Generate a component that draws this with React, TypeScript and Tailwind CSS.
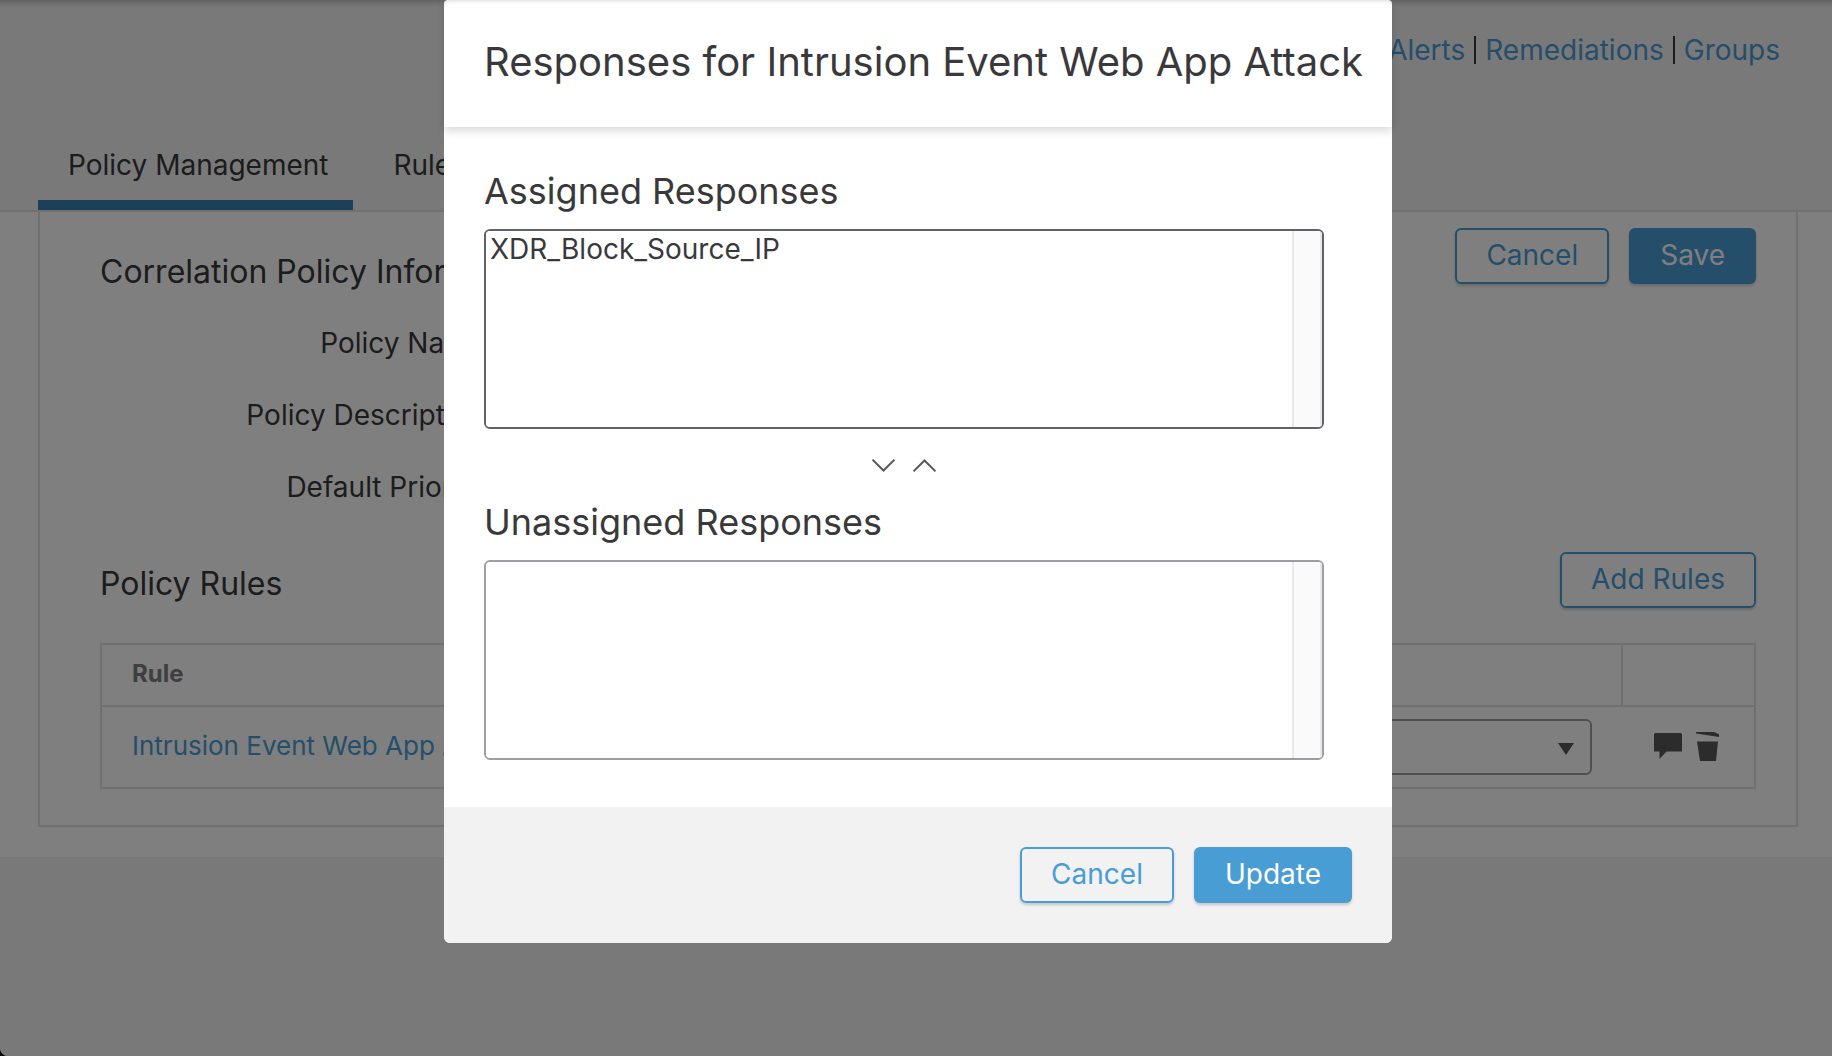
import React from "react";

const outlineButton =
  "h-14 rounded-md border-2 border-[#499dd5] px-[29px] pb-0.5 text-[28px] leading-8 text-[#499dd5] shadow-[0_2px_3px_rgba(0,0,0,0.18)]";
const solidButton =
  "h-14 rounded-md border-2 border-[#499dd5] bg-[#499dd5] px-[29px] pb-0.5 text-[28px] leading-8 text-white shadow-[0_2px_3px_rgba(0,0,0,0.18)]";

function CommentIcon() {
  return (
    <svg width="28" height="27" viewBox="0 0 28 27" fill="currentColor" aria-hidden="true">
      <path d="M1.500 0H26.500Q28 0 28 1.500V18.500H12.500L5.500 26V18.500H0V1.500Q0 0 1.500 0Z" />
    </svg>
  );
}

function TrashIcon() {
  return (
    <svg width="23" height="29" viewBox="0 0 23 29" fill="currentColor" aria-hidden="true">
      <path d="M0 0H18L23 2.200V5L0 1.500Z" />
      <path d="M1 9.500H22L20 29H4Z" />
    </svg>
  );
}

function FormRow({ id, label, children }: { id: string; label: string; children: React.ReactNode }) {
  return (
    <div className="flex h-[72px] items-center gap-6">
      <label htmlFor={id} className="w-[385px] shrink-0 text-right text-[28px] leading-8">
        {label}
      </label>
      {children}
    </div>
  );
}

function ListBox({ id, options, active }: { id: string; options: string[]; active?: boolean }) {
  return (
    <div
      className={
        active
          ? "mr-7 flex h-[200px] overflow-hidden rounded-md border-2 border-[#626168]"
          : "mr-7 flex h-[200px] overflow-hidden rounded-md border-2 border-[#9e9da4]"
      }
    >
      <select
        id={id}
        multiple
        className="min-w-0 flex-1 appearance-none overflow-hidden bg-white text-[28px] leading-9 outline-none"
      >
        {options.map((o) => (
          <option key={o} className="px-1 pt-px pb-0">
            {o}
          </option>
        ))}
      </select>
      <div className="w-[30px] border-r-2 border-l-2 border-[#e8e8e8] bg-[#fafafa]" />
    </div>
  );
}

function Page() {
  return (
    <div className="min-h-screen rounded-bl-lg bg-[#f2f2f2]">
      <header className="flex h-[212px] flex-col justify-between border-b-2 border-[#e0e0e0] pt-9 shadow-[inset_0_8px_6px_-6px_rgba(0,0,0,0.25)]">
        <nav className="flex justify-end pr-[52px] text-[28px] leading-7 text-[#499dd5]">
          <a href="#alerts" className="pr-[9px]">Alerts</a>
          <a href="#remediations" className="border-l-2 border-[#39393b] px-[9px]">Remediations</a>
          <a href="#groups" className="border-l-2 border-[#39393b] pl-[9px]">Groups</a>
        </nav>
        <nav className="flex gap-[10px] pl-[38px] text-[28px] leading-8">
          <a href="#policy" className="border-b-[10px] border-[#3881b1] pr-[25px] pb-[19px] pl-[30px]">
            Policy Management
          </a>
          <a href="#rule" className="border-b-[10px] border-transparent pr-[25px] pb-[19px] pl-[30px]">
            Rule Management
          </a>
        </nav>
      </header>
      <main className="bg-white pr-[34px] pb-[30px] pl-[38px]">
        <section className="border-2 border-t-0 border-[#e0e0e0] pt-4 pr-10 pb-9 pl-[60px]">
          <div className="flex items-start justify-between">
            <h2 className="pt-6 text-[32px] leading-10">Correlation Policy Information</h2>
            <div className="flex gap-5">
              <button className={outlineButton}>Cancel</button>
              <button className={solidButton}>Save</button>
            </div>
          </div>
          <form className="pt-[15px]">
            <FormRow id="name" label="Policy Name">
              <input id="name" className="h-14 w-[600px] rounded-md border-2 border-[#9e9da4] px-4" />
            </FormRow>
            <FormRow id="description" label="Policy Description">
              <input id="description" className="h-14 w-[600px] rounded-md border-2 border-[#9e9da4] px-4" />
            </FormRow>
            <FormRow id="priority" label="Default Priority">
              <select id="priority" className="h-14 w-[300px] appearance-none rounded-md border-2 border-[#9e9da4] px-4" />
            </FormRow>
          </form>
          <div className="flex items-start justify-between pt-[29px]">
            <h2 className="pt-3 text-[32px] leading-10">Policy Rules</h2>
            <button className={outlineButton}>Add Rules</button>
          </div>
          <table className="mt-[35px] w-full table-fixed border-separate border-spacing-0 border-2 border-[#e0e0e0]">
            <thead>
              <tr className="h-[62px] text-left text-2xl text-[#7f7f82]">
                <th className="border-b-2 border-[#e0e0e0] pr-4 pb-0.5 pl-[30px] font-bold">Rule</th>
                <th className="w-[133px] border-b-2 border-l-2 border-[#e0e0e0]" aria-label="Actions" />
              </tr>
            </thead>
            <tbody>
              <tr className="h-20">
                <td className="p-0 pr-[29px] pl-[30px]">
                  <div className="flex items-center justify-between">
                    <a href="#intrusion" className="pb-0.5 text-[26px] leading-8 text-[#499dd5]">
                      Intrusion Event Web App Attack
                    </a>
                    <div className="relative">
                      <select
                        aria-label="Priority"
                        className="block h-14 w-[320px] appearance-none rounded-md border-2 border-[#a0a0a2] bg-white"
                      />
                      <svg
                        className="pointer-events-none absolute top-6 right-[18px]"
                        width="16"
                        height="12"
                        viewBox="0 0 16 12"
                        fill="#58585b"
                        aria-hidden="true"
                      >
                        <path d="M0 0H16L8 12Z" />
                      </svg>
                    </div>
                  </div>
                </td>
                <td className="p-0">
                  <div className="flex items-center gap-[14px] pb-0.5 pl-[33px] text-[#58585b]">
                    <button aria-label="Comment">
                      <CommentIcon />
                    </button>
                    <button aria-label="Delete">
                      <TrashIcon />
                    </button>
                  </div>
                </td>
              </tr>
            </tbody>
          </table>
        </section>
      </main>
    </div>
  );
}

function ResponsesDialog() {
  return (
    <div className="fixed inset-0 flex items-start justify-center rounded-bl-lg bg-black/50 pl-1">
      <div
        role="dialog"
        aria-modal="true"
        aria-labelledby="dialog-title"
        className="w-[948px] max-w-full rounded-md bg-white"
      >
        <div className="rounded-t-sm bg-white px-10 pt-[38px] pb-[41px] shadow-[0_4px_10px_rgba(0,0,0,0.15),inset_0_4px_4px_-3px_rgba(0,0,0,0.15)]">
          <h1 id="dialog-title" className="text-[40px] leading-[48px] whitespace-nowrap">
            Responses for Intrusion Event Web App Attack
          </h1>
        </div>
        <div className="px-10 pt-10 pb-[47px]">
          <label htmlFor="assigned" className="block pb-[14px] text-4xl leading-[48px]">
            Assigned Responses
          </label>
          <ListBox id="assigned" options={["XDR_Block_Source_IP"]} active />
          <div className="mr-7 flex h-[69px] items-center justify-center gap-[18px] pt-1">
            <button aria-label="Unassign">
              <svg width="23" height="13" viewBox="0 0 23 13" fill="none" stroke="#58585b" strokeWidth="2" aria-hidden="true">
                <path d="M0.500 0.700L11.500 11.500L22.500 0.700" />
              </svg>
            </button>
            <button aria-label="Assign">
              <svg width="23" height="13" viewBox="0 0 23 13" fill="none" stroke="#58585b" strokeWidth="2" aria-hidden="true">
                <path d="M0.500 12.300L11.500 1.500L22.500 12.300" />
              </svg>
            </button>
          </div>
          <label htmlFor="unassigned" className="block pb-[14px] text-4xl leading-[48px]">
            Unassigned Responses
          </label>
          <ListBox id="unassigned" options={[]} />
        </div>
        <div className="flex justify-end gap-5 rounded-b-md bg-[#f2f2f2] p-10">
          <button className={outlineButton}>Cancel</button>
          <button className={solidButton}>Update</button>
        </div>
      </div>
    </div>
  );
}

export default function App() {
  return (
    <div className="bg-black font-[Inter,sans-serif] text-[#39393b]">
      <Page />
      <ResponsesDialog />
    </div>
  );
}
